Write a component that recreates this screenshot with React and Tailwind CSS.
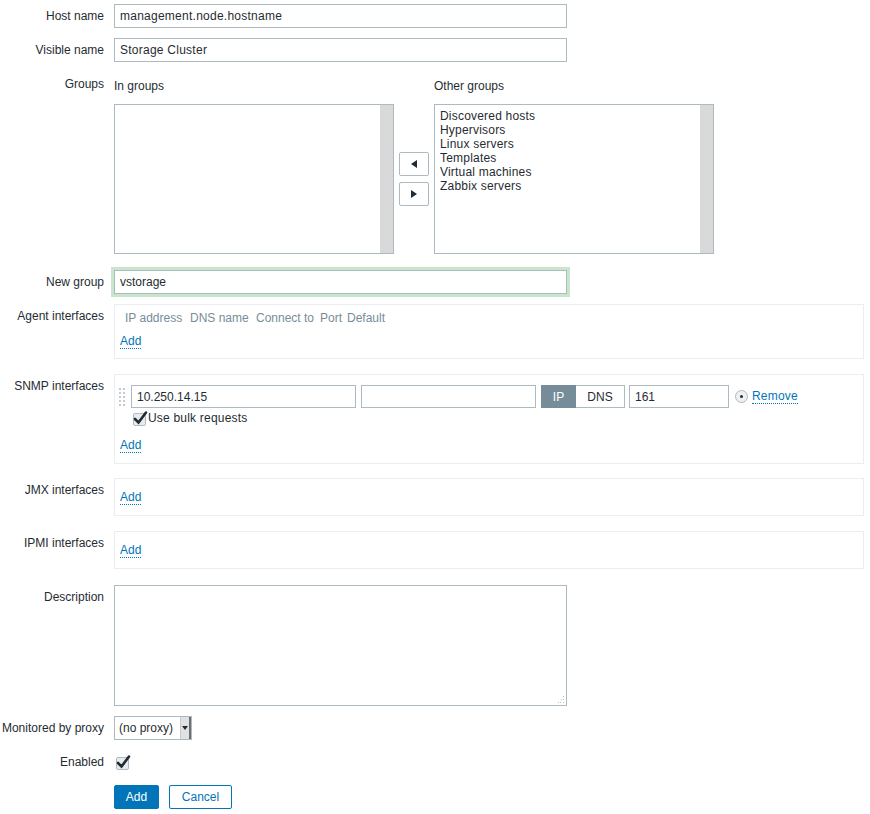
import React from 'react';

const border = 'border border-[#acbbc2]';

function Row({ label, children, className = '' }) {
  return (
    <div className={`flex ${className}`}>
      <div className="w-[104px] shrink-0 text-right leading-[24px] h-[24px] whitespace-nowrap">
        {label}
      </div>
      <div className="ml-[10px] flex-1">{children}</div>
    </div>
  );
}

function Input({ value, className = '' }) {
  return (
    <div
      className={`h-[24px] bg-white ${border} px-[5px] leading-[22px] whitespace-nowrap overflow-hidden ${className}`}
    >
      {value}
    </div>
  );
}

function AddLink() {
  return (
    <span className="text-[#0275b8] border-b border-dotted border-[#0275b8] leading-[13px] inline-block">
      Add
    </span>
  );
}

function CheckMark() {
  return (
    <svg width="16" height="16" viewBox="0 0 16 16" className="block">
      <rect x="1.5" y="3.5" width="12" height="12" rx="1.5" fill="#e9ecee" stroke="#acbbc2" />
      <path d="M3 9 L6.5 12.5 L14 2.5" fill="none" stroke="#1f2c33" strokeWidth="2.6" strokeLinecap="round" />
    </svg>
  );
}

function ListBox({ items = [] }) {
  return (
    <div className={`h-[150px] w-[280px] ${border} bg-white flex`}>
      <div className="flex-1 pt-[4px] pl-[5px] leading-[14px] tracking-[0.2px]">
        {items.map((it) => (
          <div key={it}>{it}</div>
        ))}
      </div>
      <div className="w-[13px] bg-[#d9d9d9]" />
    </div>
  );
}

function ArrowButton({ dir }) {
  return (
    <div className={`w-[30px] h-[24px] bg-white ${border} rounded-[2px] flex items-center justify-center`}>
      <svg width="6" height="8" viewBox="0 0 6 8">
        {dir === 'left' ? <path d="M6 0 L0 4 L6 8 Z" fill="#1f2c33" /> : <path d="M0 0 L6 4 L0 8 Z" fill="#1f2c33" />}
      </svg>
    </div>
  );
}

function DragHandle() {
  const dots = [];
  for (let r = 0; r < 5; r++) {
    for (let c = 0; c < 2; c++) {
      dots.push(<rect key={`${r}-${c}`} x={c * 4} y={r * 4} width="2" height="2" fill="#c2ccd1" />);
    }
  }
  return (
    <svg width="8" height="18" viewBox="0 0 8 18" className="block">
      {dots}
    </svg>
  );
}

export default function App() {
  return (
    <div
      className="w-[870px] h-[814px] bg-white text-[12px] text-[#1f2c33] pt-[4px]"
      style={{ fontFamily: '"Liberation Sans", Arial, sans-serif' }}
    >
      <Row label="Host name">
        <Input value="management.node.hostname" className="w-[453px] tracking-[0.25px]" />
      </Row>
      <Row label="Visible name" className="mt-[10px]">
        <Input value="Storage Cluster" className="w-[453px] tracking-[0.25px]" />
      </Row>

      <Row label="Groups" className="mt-[10px]">
        <div className="flex">
          <div>
            <div className="pt-[7px] pb-[11px] leading-[14px]">In groups</div>
            <ListBox />
          </div>
          <div className="w-[40px] pt-[32px] flex flex-col items-center justify-center gap-[6px] h-[182px]">
            <ArrowButton dir="left" />
            <ArrowButton dir="right" />
          </div>
          <div>
            <div className="pt-[7px] pb-[11px] leading-[14px]">Other groups</div>
            <ListBox
              items={[
                'Discovered hosts',
                'Hypervisors',
                'Linux servers',
                'Templates',
                'Virtual machines',
                'Zabbix servers',
              ]}
            />
          </div>
        </div>
      </Row>

      <Row label="New group" className="mt-[16px]">
        <Input value="vstorage" className="w-[453px] shadow-[0_0_0_3px_#c8e6c9]" />
      </Row>

      <Row label="Agent interfaces" className="mt-[10px]">
        <div className="w-[750px] h-[55px] border border-[#ebeef0] pl-[5px]">
          <div className="flex text-[#768d99] leading-[14px] pt-[6px] pl-[5px] whitespace-nowrap">
            <span className="w-[65px]">IP address</span>
            <span className="w-[66px]">DNS name</span>
            <span className="w-[64px]">Connect to</span>
            <span className="w-[27px]">Port</span>
            <span>Default</span>
          </div>
          <div className="mt-[9px] leading-[14px]">
            <AddLink />
          </div>
        </div>
      </Row>

      <Row label="SNMP interfaces" className="mt-[15px]">
        <div className="w-[750px] h-[90px] border border-[#ebeef0] pl-[4px] pt-[10px]">
          <div className="flex items-center">
            <DragHandle />
            <Input value="10.250.14.15" className="ml-[4px] w-[225px] !h-[23px] leading-[21px]" />
            <Input value="" className="ml-[5px] w-[175px] !h-[23px]" />
            <div className="ml-[5px] flex h-[23px]">
              <div className="w-[35px] bg-[#768d99] text-white border border-[#768d99] flex items-center justify-center">
                IP
              </div>
              <div className="w-[49px] bg-white border border-[#acbbc2] border-l-0 flex items-center justify-center">
                DNS
              </div>
            </div>
            <Input value="161" className="ml-[4px] w-[100px] !h-[23px] leading-[21px]" />
            <div className="ml-[6px] w-[13px] h-[13px] rounded-full border border-[#acbbc2] bg-[#eef0f1] flex items-center justify-center">
              <div className="w-[3px] h-[3px] rounded-full bg-[#1f2c33]" />
            </div>
            <span className="ml-[4px] text-[#0275b8] border-b border-dotted border-[#0275b8] leading-[13px] inline-block tracking-[0.2px]">
              Remove
            </span>
          </div>
          <div className="flex items-center mt-[2px] ml-[13px] leading-[14px] tracking-[0.2px]">
            <CheckMark />
            <span>Use bulk requests</span>
          </div>
          <div className="mt-[12px] pl-[1px] leading-[14px]">
            <AddLink />
          </div>
        </div>
      </Row>

      <Row label="JMX interfaces" className="mt-[14px]">
        <div className="w-[750px] h-[38px] border border-[#ebeef0] pl-[5px] pt-[11px] leading-[14px]">
          <AddLink />
        </div>
      </Row>

      <Row label="IPMI interfaces" className="mt-[15px]">
        <div className="w-[750px] h-[38px] border border-[#ebeef0] pl-[5px] pt-[11px] leading-[14px]">
          <AddLink />
        </div>
      </Row>

      <Row label="Description" className="mt-[16px]">
        <div className={`relative w-[453px] h-[121px] bg-white ${border}`}>
          <svg width="8" height="8" viewBox="0 0 8 8" className="absolute right-[1px] bottom-[1px]">
            <rect x="6" y="0" width="1" height="1" fill="#b8c3c8" />
            <rect x="4" y="3" width="1" height="1" fill="#b8c3c8" />
            <rect x="6" y="3" width="1" height="1" fill="#b8c3c8" />
            <rect x="1" y="6" width="1" height="1" fill="#b8c3c8" />
            <rect x="3" y="6" width="1" height="1" fill="#b8c3c8" />
            <rect x="6" y="6" width="1" height="1" fill="#b8c3c8" />
          </svg>
        </div>
      </Row>

      <Row label="Monitored by proxy" className="mt-[10px]">
        <div className={`w-[78px] h-[24px] bg-white ${border} flex`}>
          <div className="flex-1 pl-[4px] leading-[22px]">(no proxy)</div>
          <div className="w-[11px] bg-[#e1e1e1] border-l border-[#c9c9c9] border-r-2 border-r-[#6e6e6e] flex items-center justify-center">
            <svg width="6" height="4" viewBox="0 0 6 4">
              <path d="M0 0 L6 0 L3 4 Z" fill="#1f2c33" />
            </svg>
          </div>
        </div>
      </Row>

      <Row label="Enabled" className="mt-[10px]">
        <div className="h-[24px] flex items-center pl-[1px]">
          <CheckMark />
        </div>
      </Row>

      <div className="flex mt-[11px] ml-[114px] gap-[10px]">
        <div className="h-[24px] w-[45px] bg-[#0275b8] border border-[#0275b8] text-white rounded-[2px] flex items-center justify-center">
          Add
        </div>
        <div className="h-[24px] w-[63px] bg-white border border-[#0275b8] text-[#0275b8] rounded-[2px] flex items-center justify-center">
          Cancel
        </div>
      </div>
    </div>
  );
}
